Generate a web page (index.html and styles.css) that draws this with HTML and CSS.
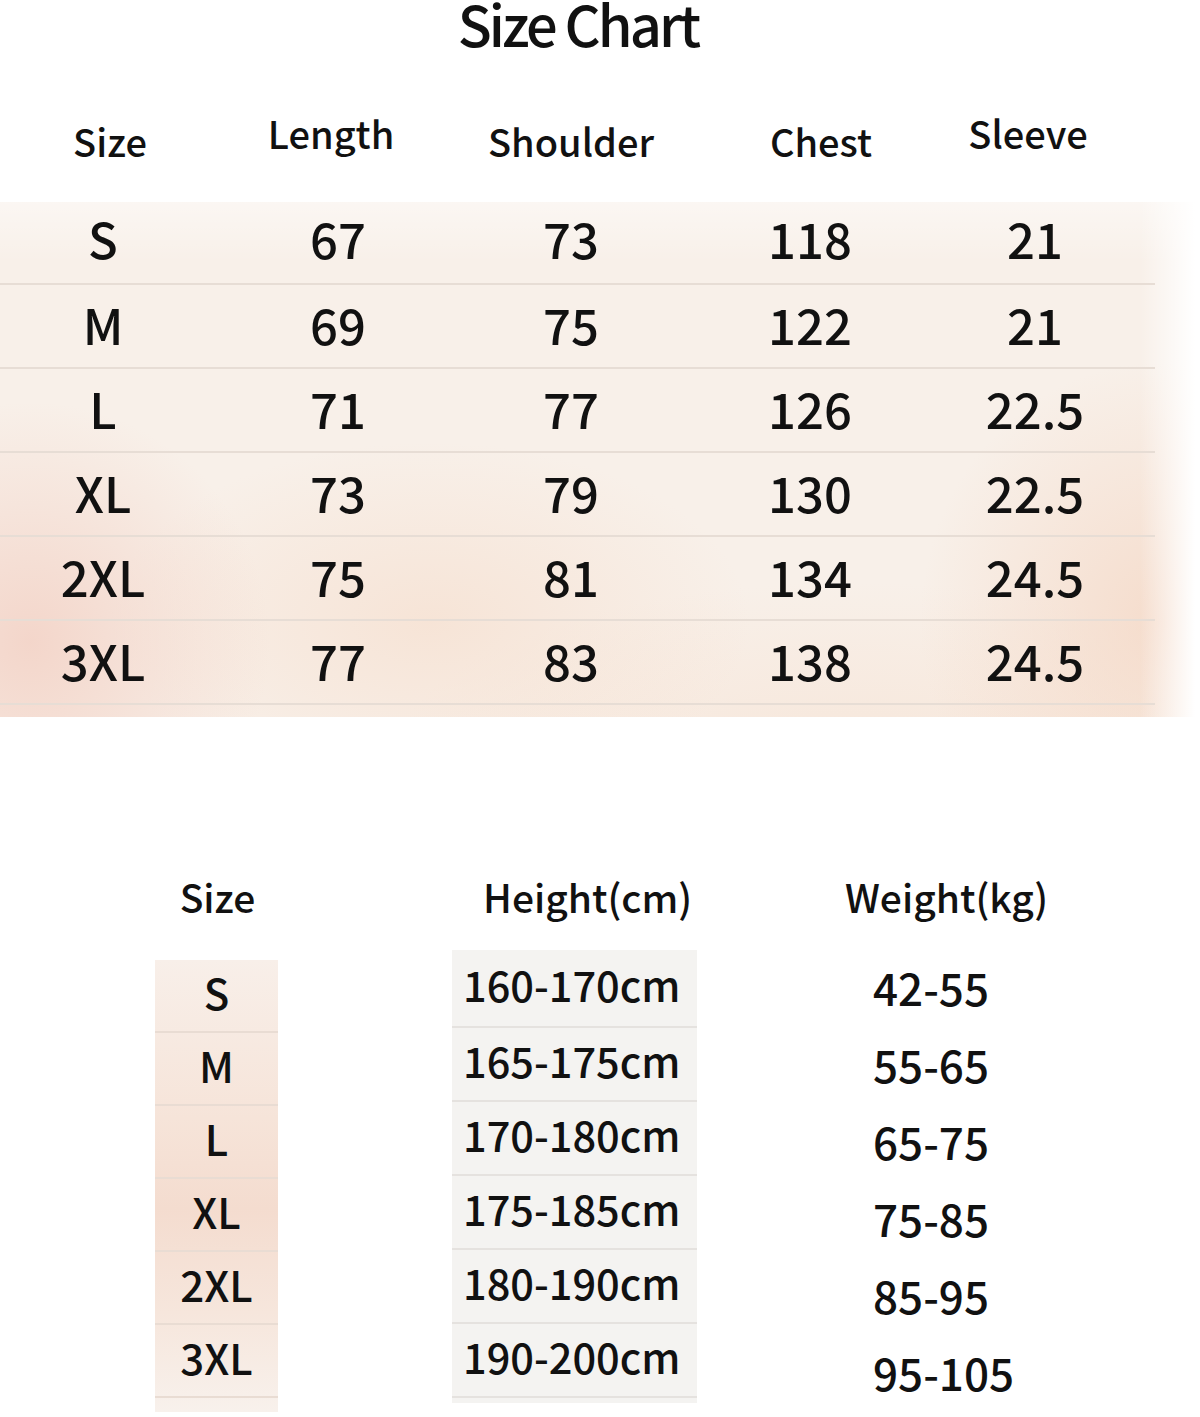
FILE: index.html
```html
<!DOCTYPE html>
<html lang="en">
<head>
<meta charset="utf-8">
<title>Size Chart</title>
<link rel="stylesheet" href="styles.css">
</head>
<body>
<h1 class="title">Size Chart</h1>

<div class="chart-head">
  <div class="h h-size">Size</div>
  <div class="h h-length">Length</div>
  <div class="h h-shoulder">Shoulder</div>
  <div class="h h-chest">Chest</div>
  <div class="h h-sleeve">Sleeve</div>
</div>

<div class="band">
  <div class="row r1"><span>S</span><span>67</span><span>73</span><span>118</span><span>21</span></div>
  <div class="row"><span>M</span><span>69</span><span>75</span><span>122</span><span>21</span></div>
  <div class="row"><span>L</span><span>71</span><span>77</span><span>126</span><span>22.5</span></div>
  <div class="row"><span>XL</span><span>73</span><span>79</span><span>130</span><span>22.5</span></div>
  <div class="row"><span>2XL</span><span>75</span><span>81</span><span>134</span><span>24.5</span></div>
  <div class="row"><span>3XL</span><span>77</span><span>83</span><span>138</span><span>24.5</span></div>
</div>

<div class="fit">
  <div class="fcol fcol-size">
    <div class="fh">Size</div>
    <div class="size-band">
      <div class="fc">S</div>
      <div class="fc">M</div>
      <div class="fc">L</div>
      <div class="fc">XL</div>
      <div class="fc">2XL</div>
      <div class="fc">3XL</div>
    </div>
  </div>
  <div class="fcol fcol-height">
    <div class="fh">Height(cm)</div>
    <div class="height-band">
      <div class="hc hc1">160-170cm</div>
      <div class="hc">165-175cm</div>
      <div class="hc">170-180cm</div>
      <div class="hc">175-185cm</div>
      <div class="hc">180-190cm</div>
      <div class="hc">190-200cm</div>
    </div>
  </div>
  <div class="fcol fcol-weight">
    <div class="fh">Weight(kg)</div>
    <div class="weight-list">
      <div class="wc">42-55</div>
      <div class="wc">55-65</div>
      <div class="wc">65-75</div>
      <div class="wc">75-85</div>
      <div class="wc">85-95</div>
      <div class="wc">95-105</div>
    </div>
  </div>
</div>
</body>
</html>
```

FILE: styles.css
```css
html, body {
  margin: 0;
  padding: 0;
  background: #ffffff;
}

body {
  width: 1200px;
  height: 1417px;
  overflow: hidden;
  font-family: "Noto Sans CJK SC", "Noto Sans", sans-serif;
  font-weight: 500;
  color: #111111;
}

.title {
  margin: 0;
  padding-top: 3px;
  height: 42px;
  line-height: 40px;
  font-size: 56px;
  font-weight: 500;
  letter-spacing: -2.9px;
  text-align: center;
  padding-right: 44px;
}

.chart-head {
  display: grid;
  grid-template-columns: 206px 264px 202px 276px 174px;
  height: 157px;
  align-items: end;
}

.h {
  font-size: 38px;
  line-height: 38px;
  text-align: center;
}

.h-size { padding-bottom: 42px; padding-left: 14px; }
.h-length { padding-bottom: 50px; padding-right: 14px; }
.h-shoulder { padding-bottom: 42px; }
.h-chest { padding-bottom: 42px; padding-left: 22px; }
.h-sleeve { padding-bottom: 50px; padding-right: 14px; }

.band {
  height: 515px;
  box-sizing: border-box;
  padding-bottom: 11px;
  background:
    linear-gradient(to right, rgba(255,255,255,0) 1140px, #ffffff 1195px),
    linear-gradient(to bottom, rgba(255,255,255,0.45) 0px, rgba(255,255,255,0) 60px),
    radial-gradient(ellipse 240px 240px at 30px 440px, rgba(242, 205, 192, 0.75), rgba(242, 205, 192, 0) 100%),
    radial-gradient(ellipse 320px 180px at 430px 420px, rgba(245, 216, 196, 0.5), rgba(245, 216, 196, 0) 100%),
    radial-gradient(ellipse 300px 150px at 660px 690px, rgba(240, 212, 218, 0.55), rgba(240, 212, 218, 0) 100%),
    radial-gradient(ellipse 240px 260px at 1160px 420px, rgba(244, 212, 192, 0.7), rgba(244, 212, 192, 0) 100%),
    radial-gradient(ellipse 460px 180px at 850px 560px, rgba(246, 224, 208, 0.6), rgba(246, 224, 208, 0) 100%),
    #f8f0e9;
}

.row {
  display: grid;
  grid-template-columns: 206px 264px 202px 276px 174px;
  width: 1155px;
  height: 84px;
  box-sizing: border-box;
  border-bottom: 2px solid #e7ddd5;
  align-items: center;
  padding-bottom: 6px;
  font-size: 49px;
  line-height: 49px;
}

.row.r1 {
  height: 83px;
  padding-bottom: 10px;
}

.row span {
  text-align: center;
  white-space: nowrap;
}

.fit {
  display: flex;
  margin-top: 158px;
  padding-left: 155px;
}

.fcol {
  display: flex;
  flex-direction: column;
}

.fh {
  font-size: 39px;
  line-height: 43px;
  height: 43px;
  white-space: nowrap;
}

.fcol-size {
  width: 123px;
}

.fcol-size .fh {
  text-align: center;
  padding-left: 2px;
}

.size-band {
  margin-top: 42px;
  padding-bottom: 14px;
  background: linear-gradient(to bottom, #f8efe9 0%, #f6e4d9 35%, #f4dccf 55%, #f6e6dc 78%, #f8f1ec 100%);
}

.fc {
  height: 73px;
  box-sizing: border-box;
  border-bottom: 2px solid #e9dcd3;
  display: flex;
  align-items: center;
  justify-content: center;
  padding-bottom: 8px;
  font-size: 42px;
  line-height: 42px;
}

.fcol-height {
  width: 245px;
  margin-left: 174px;
}

.fcol-height .fh {
  padding-left: 31px;
}

.height-band {
  margin-top: 32px;
  padding-bottom: 5px;
  background: #f4f3f1;
}

.hc {
  height: 74px;
  box-sizing: border-box;
  border-bottom: 2px solid #e5e2df;
  display: flex;
  align-items: center;
  padding-left: 11px;
  padding-bottom: 8px;
  font-size: 41.5px;
  line-height: 42px;
  white-space: nowrap;
}

.hc.hc1 {
  height: 78px;
}

.fcol-weight {
  padding-left: 148px;
}

.weight-list {
  margin-top: 34px;
  padding-left: 28px;
}

.wc {
  height: 77px;
  display: flex;
  align-items: center;
  padding-bottom: 8px;
  box-sizing: border-box;
  font-size: 44px;
  line-height: 44px;
  white-space: nowrap;
}
```
